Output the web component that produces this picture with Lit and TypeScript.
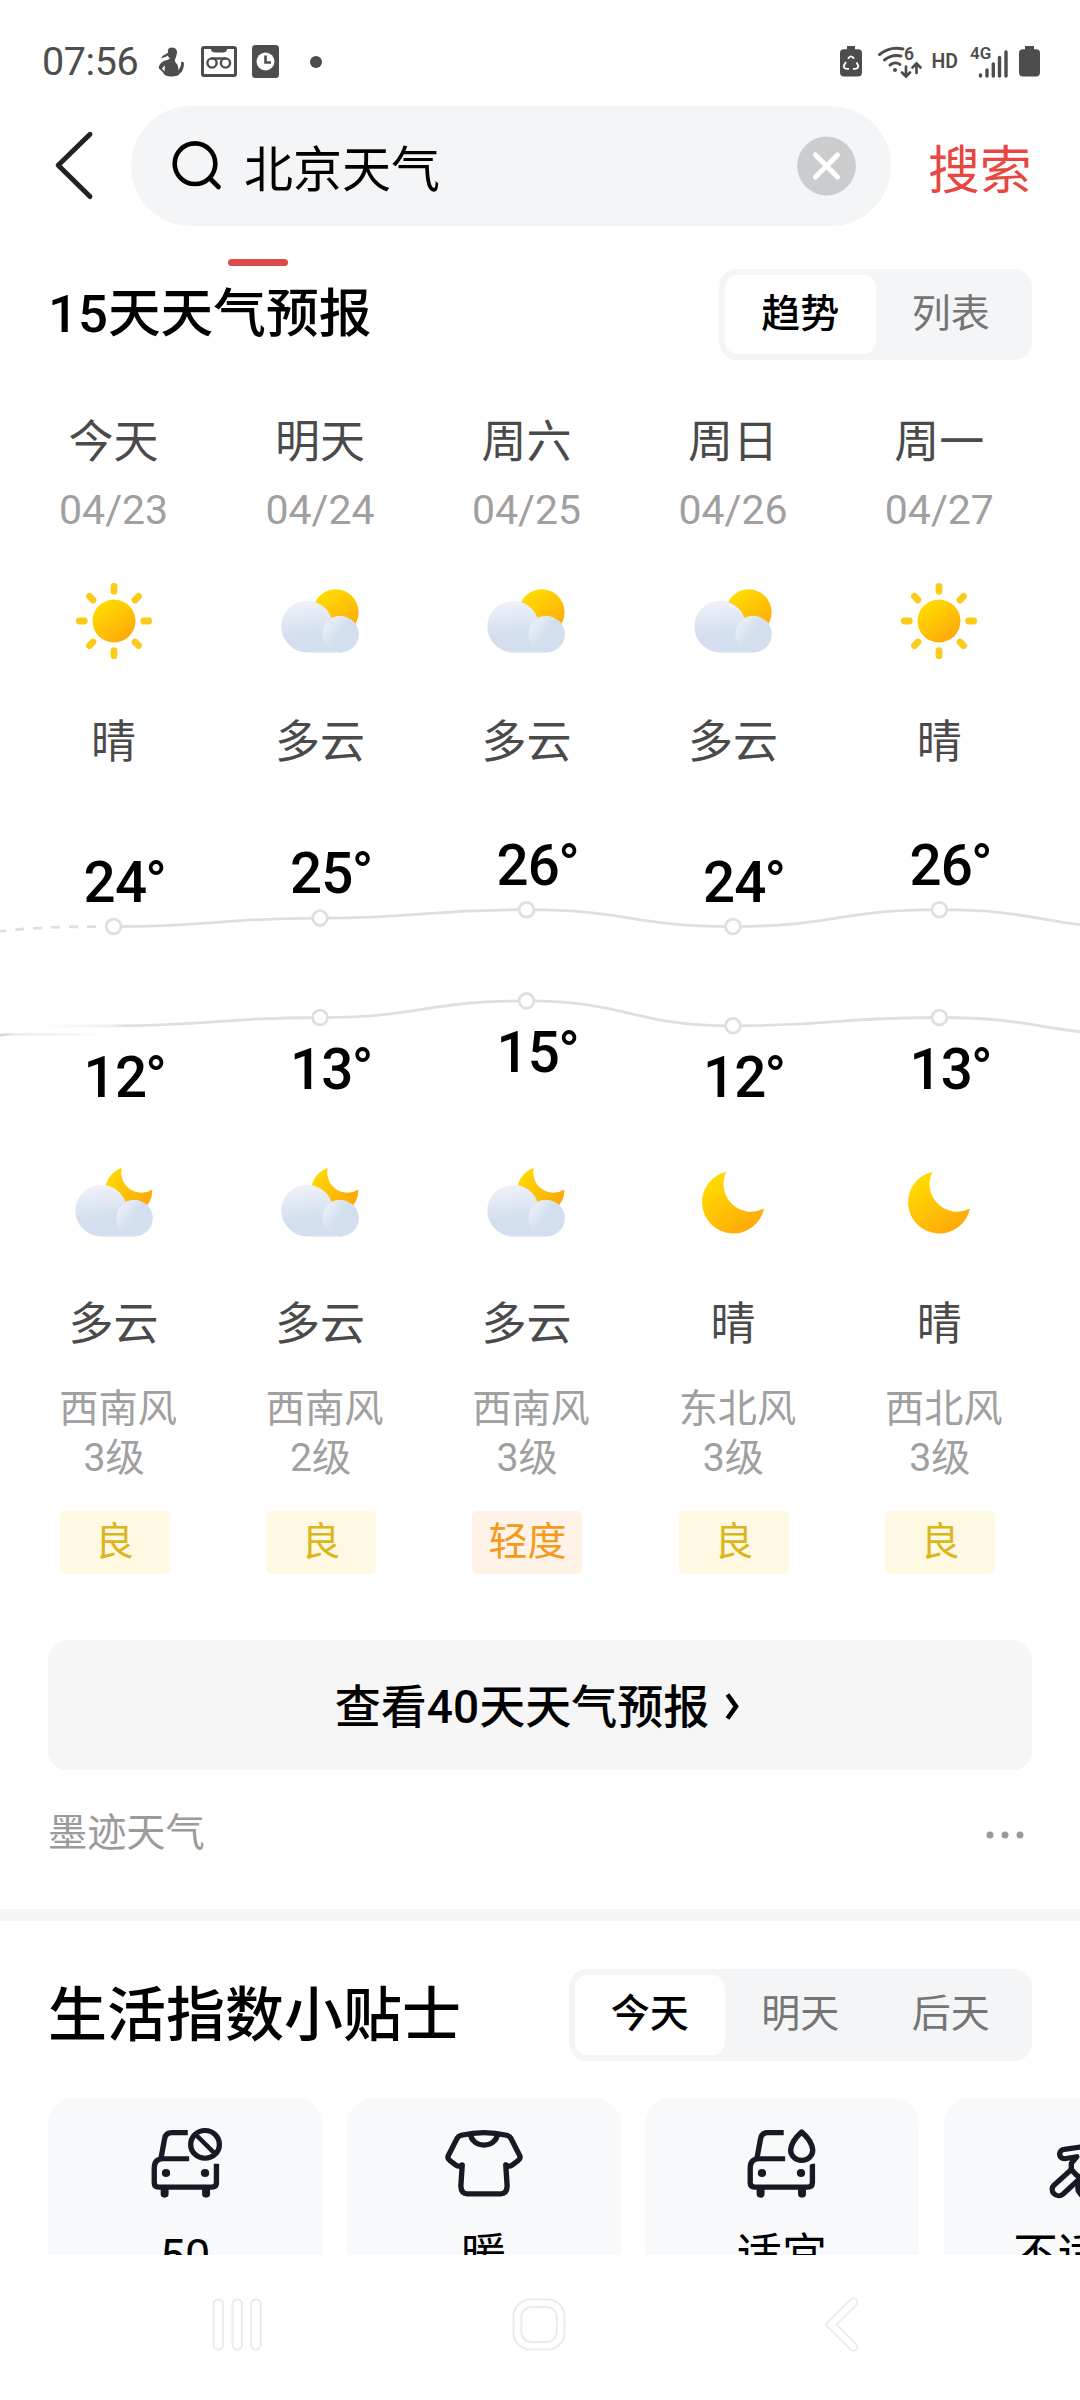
import { LitElement, html, svg, css } from 'lit';
import { customElement, property, state } from 'lit/decorators.js';
import { classMap } from 'lit/directives/class-map.js';

type Sky = 'sunny' | 'cloudy' | 'clearNight' | 'cloudyNight';

interface Day {
  name: string;
  date: string;
  day: Sky;
  high: number;
  low: number;
  night: Sky;
  wind: string;
  level: string;
  air: string;
}

const SKY_TEXT: Record<Sky, string> = {
  sunny: '晴',
  cloudy: '多云',
  clearNight: '晴',
  cloudyNight: '多云',
};

const DAYS: Day[] = [
  { name: '今天', date: '04/23', day: 'sunny', high: 24, low: 12, night: 'cloudyNight', wind: '西南风', level: '3级', air: '良' },
  { name: '明天', date: '04/24', day: 'cloudy', high: 25, low: 13, night: 'cloudyNight', wind: '西南风', level: '2级', air: '良' },
  { name: '周六', date: '04/25', day: 'cloudy', high: 26, low: 15, night: 'cloudyNight', wind: '西南风', level: '3级', air: '轻度' },
  { name: '周日', date: '04/26', day: 'cloudy', high: 24, low: 12, night: 'clearNight', wind: '东北风', level: '3级', air: '良' },
  { name: '周一', date: '04/27', day: 'sunny', high: 26, low: 13, night: 'clearNight', wind: '西北风', level: '3级', air: '良' },
];

const FONT = css`
  :host {
    font-family: Roboto, 'Noto Sans CJK SC', sans-serif;
  }
`;

@customElement('weather-icon')
export class WeatherIcon extends LitElement {
  @property() kind: Sky = 'sunny';

  static styles = css`
    :host {
      display: block;
      width: 80px;
      height: 80px;
    }
    svg {
      display: block;
      overflow: visible;
    }
  `;

  private cloud() {
    return svg`
      <path d="M27.2 19.8a25.9 25.8 0 0 1 24.3 17a18.2 18.2 0 1 1 9.1 34.6H27.2a25.9 25.8 0 0 1 0-51.6z" fill="url(#cloud)" />
      <circle cx="60.6" cy="53.2" r="18.2" fill="url(#puff)" />`;
  }

  private shape() {
    switch (this.kind) {
      case 'sunny':
        return svg`
          <circle cx="40" cy="40" r="21.5" fill="url(#sun)" />
          ${[0, 45, 90, 135, 180, 225, 270, 315].map(
            (a) => svg`<path d="M40 10.3V5.3" transform="rotate(${a} 40 40)" stroke="#fbcb1c" stroke-width="6.8" stroke-linecap="round" />`
          )}`;
      case 'cloudy':
        return svg`<circle cx="55.7" cy="31.2" r="22.9" fill="url(#sun)" />${this.cloud()}`;
      case 'clearNight':
        return svg`<path d="M33.5 6.7A31.3 31.3 0 1 0 71 43.4A27.5 27.5 0 0 1 33.5 6.7z" fill="url(#sun)" />`;
      default:
        return svg`
          <path d="M47.6 3.1A23.5 23.5 0 1 0 78.3 24.4A20.2 20.2 0 0 1 47.6 3.1z" fill="url(#moon)" />
          ${this.cloud()}`;
    }
  }

  render() {
    return html`
      <svg width="80" height="80" viewBox="0 0 80 80">
        <defs>
          <linearGradient id="sun" x1="0.1" y1="0" x2="0.8" y2="1">
            <stop offset="0.1" stop-color="#ffdc00" />
            <stop offset="1" stop-color="#ffa60a" />
          </linearGradient>
          <linearGradient id="moon" x1="0" y1="0" x2="1" y2="0.7">
            <stop offset="0.2" stop-color="#ffd400" />
            <stop offset="1" stop-color="#fba60c" />
          </linearGradient>
          <linearGradient id="cloud" x1="0.25" y1="0" x2="0.4" y2="1">
            <stop offset="0" stop-color="#f1f2fa" />
            <stop offset="0.65" stop-color="#d3dfee" />
          </linearGradient>
          <linearGradient id="puff" x1="0.05" y1="0.2" x2="0.45" y2="0.5">
            <stop offset="0" stop-color="#ebf0f8" />
            <stop offset="1" stop-color="#d3dfee" />
          </linearGradient>
        </defs>
        ${this.shape()}
      </svg>
    `;
  }
}

@customElement('segment-tabs')
export class SegmentTabs extends LitElement {
  @property({ attribute: false }) items: string[] = [];

  @state() private active = 0;

  static styles = [
    FONT,
    css`
      :host {
        display: flex;
        box-sizing: border-box;
        height: 91.5px;
        padding: 6px;
        border-radius: 18px;
        background: #f3f5f7;
      }
      .tab {
        display: flex;
        justify-content: center;
        width: 150.5px;
        border-radius: 13px;
        font-size: 39px;
        line-height: 78px;
        color: #757575;
      }
      .tab.on {
        background: #fff;
        color: #000;
        font-weight: 500;
      }
    `,
  ];

  render() {
    return this.items.map(
      (label, i) => html`<div
        class=${classMap({ tab: true, on: i === this.active })}
        @click=${() => (this.active = i)}
      >
        ${label}
      </div>`
    );
  }
}

const COL = 206.45;
const FIRST_X = 113.6;

@customElement('temperature-trend')
export class TemperatureTrend extends LitElement {
  @property({ attribute: false }) days: Day[] = [];

  static styles = [
    FONT,
    css`
      :host {
        display: block;
        height: 300px;
      }
      svg {
        display: block;
      }
      .line {
        fill: none;
        stroke: #dedfe3;
        stroke-width: 2.8;
      }
      .dot {
        fill: #fff;
        stroke: #dedfe3;
        stroke-width: 2.8;
      }
      .temp {
        font-size: 56.5px;
        font-weight: 500;
        letter-spacing: -0.8px;
        fill: #000;
      }
    `,
  ];

  private curve(ys: number[]): string {
    return ys
      .map((y, i) => {
        const x = FIRST_X + i * COL;
        if (i === 0) return `M${x} ${y}`;
        const mid = x - COL / 2;
        return `C${mid} ${ys[i - 1]} ${mid} ${y} ${x} ${y}`;
      })
      .join('');
  }

  render() {
    const highs = this.days.map((d) => 107.5 - (d.high - 24) * 8.4);
    const lows = this.days.map((d) => 206.8 - (d.low - 12) * 8.3);
    const x = (i: number) => FIRST_X + i * COL;
    return html`
      <svg width="1080" height="300" viewBox="0 0 1080 300">
        <defs>
          <linearGradient id="low" gradientUnits="userSpaceOnUse" x1="40" y1="0" x2="126" y2="0">
            <stop offset="0" stop-color="#dedfe3" stop-opacity="0" />
            <stop offset="0.8" stop-color="#dedfe3" stop-opacity="0.5" />
            <stop offset="1" stop-color="#dedfe3" />
          </linearGradient>
          <linearGradient id="past" gradientUnits="userSpaceOnUse" x1="0" y1="0" x2="110" y2="0">
            <stop offset="0" stop-color="#d0d1d5" />
            <stop offset="0.12" stop-color="#ebebed" />
            <stop offset="1" stop-color="#fff" />
          </linearGradient>
        </defs>
        <path class="line" stroke-dasharray="9 9" d="M96 107.700C60 107.700 40 108 -6 112.800" />
        <path class="line" d=${this.curve([...highs, 109])} />
        <path d="M0 216.200Q4 215.400 10 215.400H110" fill="none" stroke="url(#past)" stroke-width="2.6" />
        <path d=${'M40 207L' + this.curve([...lows, 216]).slice(1)} fill="none" stroke="url(#low)" stroke-width="2.8" />
        ${highs.map(
          (y, i) => svg`
            <circle class="dot" cx=${x(i)} cy=${y} r="7.4" />
            <text class="temp" x=${x(i) - 30} y=${y - 25}>${this.days[i].high}<tspan dx="-1">°</tspan></text>`
        )}
        ${lows.map(
          (y, i) => svg`
            ${i ? svg`<circle class="dot" cx=${x(i)} cy=${y} r="7.4" />` : ''}
            <text class="temp" x=${x(i) - 30} y=${y + 71.2}>${this.days[i].low}<tspan dx="-1">°</tspan></text>`
        )}
      </svg>
    `;
  }
}

// car body shared by the plate-limit and car-wash tips
const car = svg`
  <path d="M118 20H72Q54 20 51 38L41 94" />
  <path d="M122 98H46Q21 98 21 126V170Q21 183 34 183H188Q201 183 201 170V113" />
  <path d="M51 192V203M171 192V203" stroke-width="23" stroke-linecap="round" />
  <circle cx="55" cy="141" r="12" fill="#171a24" stroke="none" />
  <circle cx="168" cy="141" r="12" fill="#171a24" stroke="none" />`;

const TIPS = [
  {
    label: '50',
    icon: svg`${car}
      <circle cx="168" cy="55" r="49" fill="#f7f9fb" stroke="#f7f9fb" />
      <circle cx="168" cy="55" r="41.5" />
      <path d="M140 25L196 82" stroke-width="13" />`,
  },
  {
    label: '暖',
    icon: svg`
      <path d="M44 28Q110 12 176 28Q184 30 188 37L213 88Q217 97 209 103L192 117Q186 122 179 119L173 116L177 180Q176 203 158 203H62Q44 203 43 180L47 116L41 119Q34 122 28 117L11 103Q3 97 7 88L32 37Q36 30 44 28Z" />
      <path d="M71 24C75 68 145 68 149 24" />`,
  },
  {
    label: '适宜',
    icon: svg`<g transform="translate(-3 0)">${car}
      <path d="M170 18Q140 45 138 72A32 31 0 0 0 202 72Q200 45 170 18Z" fill="#f7f9fb" stroke="#f7f9fb" stroke-width="38" />
      <path d="M170 18Q140 45 138 72A32 31 0 0 0 202 72Q200 45 170 18Z" />
    </g>`,
  },
  {
    label: '不适宜',
    icon: svg`
      <path d="M118 62L62 70A14 14 0 0 0 62 98L98 92L82 112V130L98 148L118 158" />
      <path d="M80 132L33 176A18 18 0 0 0 58 204L110 154" />
      <path d="M110 158Q98 168 102 194L112 208" />`,
  },
];

@customElement('app-root')
export class AppRoot extends LitElement {
  static styles = [
    FONT,
    css`
      :host {
        display: flex;
        flex-direction: column;
        width: 1080px;
        height: 2400px;
        overflow: hidden;
        background: #fff;
        color: #000;
      }
      svg {
        display: block;
        flex: none;
        overflow: visible;
      }
      .status {
        display: flex;
        align-items: center;
        height: 80px;
        padding: 43px 39px 0 42px;
        box-sizing: border-box;
        color: #4d4d4d;
      }
      .clock {
        width: 116px;
        font-size: 39.5px;
        line-height: 36px;
        letter-spacing: -0.4px;
      }
      .spacer {
        flex: 1;
      }
      .hd {
        font-size: 19.5px;
        font-weight: 600;
        line-height: 34px;
        margin: 0 13px 0 9px;
      }
      .net {
        font-size: 17px;
        font-weight: 600;
      }
      .six {
        font-size: 17.5px;
        font-weight: 600;
      }
      .search {
        display: flex;
        align-items: center;
        height: 120px;
        margin-top: 26px;
      }
      .back {
        margin-left: 53px;
      }
      .pill {
        display: flex;
        align-items: center;
        box-sizing: border-box;
        width: 760px;
        height: 120px;
        margin-left: 37px;
        padding: 0 35px 0 39px;
        border-radius: 60px;
        background: #f3f5f7;
      }
      .query {
        flex: 1;
        margin-left: 20px;
        font-size: 49px;
        line-height: 60px;
        padding-top: 10px;
      }
      .go {
        margin-left: 37px;
        padding-top: 12px;
        font-size: 51.8px;
        line-height: 60px;
        color: #ea4640;
      }
      .marker {
        width: 60px;
        height: 6.5px;
        margin: 33px 0 0 228px;
        border-radius: 4px;
        background: #d94c4a;
      }
      .head {
        display: flex;
        justify-content: space-between;
        padding: 0 48px;
      }
      .forecast-head {
        margin-top: 3px;
      }
      .title {
        font-size: 52.7px;
        font-weight: 500;
        line-height: 90px;
      }
      .days {
        display: grid;
        grid-template-columns: repeat(5, 206.45px);
        padding-left: 10.4px;
      }
      .cell {
        display: flex;
        flex-direction: column;
        align-items: center;
      }
      .name,
      .sky {
        height: 46px;
        font-size: 45px;
        line-height: 46px;
        color: #4a4a4a;
      }
      .name {
        margin-top: 60px;
      }
      .date {
        height: 46px;
        margin: 21px 0 47.6px;
        font-size: 41px;
        line-height: 46px;
        color: #a0a0a0;
      }
      .day-sky {
        margin: 59.4px 0 53.5px;
      }
      .night-icon {
        margin-top: 45.9px;
      }
      .night-sky {
        margin: 56.6px 0 37px;
      }
      .wind {
        width: 110px;
        height: 98px;
        margin-left: 1px;
        font-size: 39.2px;
        line-height: 49px;
        color: #a0a0a0;
        text-align: center;
        white-space: nowrap;
      }
      .wind-name {
        width: 118px;
      }
      .air {
        width: 110px;
        height: 62.3px;
        margin: 28.5px 0 0 2px;
        border-radius: 5px;
        background: #fff9e3;
        color: #dbb61c;
        font-size: 39px;
        line-height: 63px;
        text-align: center;
      }
      .air.mild {
        background: #fff2e6;
        color: #f39a1d;
      }
      .more {
        display: flex;
        justify-content: center;
        align-items: center;
        gap: 15px;
        box-sizing: border-box;
        height: 130px;
        margin: 66.5px 48px 0;
        padding: 3px 5px 0 0;
        border-radius: 19px;
        background: #f6f6f7;
        font-size: 46px;
        font-weight: 500;
      }
      .more-text {
        line-height: 60px;
      }
      .source {
        display: flex;
        justify-content: space-between;
        align-items: center;
        height: 60px;
        margin: 33px 56px 46px 48px;
        font-size: 39.2px;
        line-height: 62px;
        color: #9b9b9b;
      }
      .divider {
        height: 12px;
        flex: none;
        background: #f3f5f7;
      }
      .life-head {
        margin-top: 48px;
      }
      .life-title {
        font-size: 59px;
        line-height: 94px;
        height: 91.5px;
      }
      .cards {
        display: flex;
        flex: none;
        gap: 24.5px;
        height: 157.5px;
        margin: 37px 0 0 48px;
        overflow: hidden;
      }
      .card {
        flex: none;
        display: flex;
        flex-direction: column;
        align-items: center;
        width: 274px;
        height: 260px;
        border-radius: 26px;
        background: #f7f9fb;
        font-size: 45px;
      }
      .card-icon {
        margin: 28.3px 0 33px;
      }
      .card-label {
        line-height: 46px;
      }
      .nav {
        flex: 1;
        display: flex;
        align-items: flex-start;
        padding: 42px 0 0 211px;
      }
    `,
  ];

  private renderStatus() {
    return html`
      <div class="status">
        <div class="clock">07:56</div>
        <svg width="26" height="30" viewBox="0 0 26 32" preserveAspectRatio="none" fill="#4d4d4d">
          <path d="M10 6Q9 0.500 14 0.500Q19.500 0.500 19 7L17.500 12Q16 15 18 17Q21 20 20 25Q24 20 23 16Q25 15 26 17Q26 25 22 28Q20 32 12 31.500Q6 31 5 27L1 23Q0 21 3 17Q6 14 10 13.500L12 12Q10 11 10 9L8 10.500Q5 11 3 12.500Q4 9 7 8Z" />
          <path d="M7 19.500L4 23L6.500 26Z" fill="#fff" />
        </svg>
        <svg width="68" height="31" viewBox="-17 0 68 31" fill="none" stroke="#4d4d4d">
          <rect x="1.500" y="1.500" width="33" height="28" rx="1.500" stroke-width="3" />
          <path d="M10 2H26V4Q25 6.500 22 6.500H14Q11 6.500 10 4Z" fill="#4d4d4d" stroke="none" />
          <circle cx="11" cy="17" r="4.600" stroke-width="2.400" />
          <circle cx="24.500" cy="17" r="4.600" stroke-width="2.400" />
          <path d="M10.500 12.500H25" stroke-width="2.400" />
        </svg>
        <svg width="27" height="33" viewBox="0 0 27 33">
          <rect width="27" height="33" rx="3.500" fill="#4d4d4d" />
          <circle cx="13.500" cy="16.500" r="9" fill="#fff" />
          <path d="M13.500 10.500V17.500H19" fill="none" stroke="#4d4d4d" stroke-width="2.600" />
        </svg>
        <svg width="44" height="12" viewBox="-31 0 44 12">
          <circle cx="6" cy="6" r="6" fill="#4d4d4d" />
        </svg>
        <div class="spacer"></div>
        <svg width="22" height="31" viewBox="0 0 22 33" preserveAspectRatio="none">
          <path d="M7 0H15V3.500H18Q22 3.500 22 7.500V28Q22 32.500 18 32.500H4Q0 32.500 0 28V7.500Q0 3.500 4 3.500H7Z" fill="#4d4d4d" />
          <path d="M8 13.500Q11 8.500 14 13.500M16.500 17.500L18 20.500Q19 24 15 24.300H13M9 24.300H7Q3 24 4 20.500L6 17" fill="none" stroke="#fff" stroke-width="1.900" />
        </svg>
        <svg width="60" height="32" viewBox="-16 0 60 32" fill="none" stroke="#4d4d4d" stroke-linecap="round">
          <path d="M1.500 8.500Q12 0 25 3" stroke-width="2.900" />
          <path d="M6.500 14Q14 8 23 10" stroke-width="2.900" />
          <path d="M12 19Q17 15 22 18.500" stroke-width="2.900" />
          <circle cx="17" cy="24" r="2" fill="#4d4d4d" stroke="none" />
          <path d="M28 20.500V30M24 26.500L28 30.500L32 26.500M38.500 27V17.500M34.500 21.500L38.500 17.500L42.500 21.500" stroke-width="2.700" />
          <text class="six" x="26" y="14" fill="#4d4d4d" stroke="none">6</text>
        </svg>
        <div class="hd">HD</div>
        <svg width="38" height="32" viewBox="0 0 38 32" stroke="#4d4d4d" stroke-width="3.400" stroke-linecap="round">
          <text class="net" x="-1" y="12.500" fill="#4d4d4d" stroke="none">4G</text>
          <path d="M9.500 29V30M16 24V30M22.300 18V30M28.500 11.500V30M35 6V30" />
        </svg>
        <svg width="32" height="31" viewBox="-10 0 32 33" preserveAspectRatio="none">
          <path d="M6 0H15V3.500H17Q21 3.500 21 7.500V28Q21 32.500 17 32.500H4Q0 32.500 0 28V7.500Q0 3.500 4 3.500H6Z" fill="#4d4d4d" />
        </svg>
      </div>
    `;
  }

  private renderSearch() {
    return html`
      <div class="search">
        <svg class="back" width="41" height="74" viewBox="0 0 41 74">
          <path d="M37 5.300L5.200 36.300L37 67.500" fill="none" stroke="#222" stroke-width="5" stroke-linecap="round" stroke-linejoin="round" />
        </svg>
        <div class="pill">
          <svg width="54" height="54" viewBox="-2 0 54 54" fill="none" stroke="#000" stroke-width="4.600">
            <circle cx="23" cy="24.700" r="20.300" />
            <path d="M38 39.500L46.500 48" stroke-linecap="round" />
          </svg>
          <div class="query">北京天气</div>
          <svg width="59" height="59" viewBox="0 0 59 59">
            <circle cx="29.500" cy="29" r="29.400" fill="#cbccce" />
            <path d="M18.500 18L40.500 40M40.500 18L18.500 40" stroke="#fff" stroke-width="5" stroke-linecap="round" />
          </svg>
        </div>
        <div class="go">搜索</div>
      </div>
    `;
  }

  private renderForecast() {
    return html`
      <div class="head forecast-head">
        <div class="title">15天天气预报</div>
        <segment-tabs .items=${['趋势', '列表']}></segment-tabs>
      </div>
      <div class="days">
        ${DAYS.map(
          (d) => html`<div class="cell">
            <div class="name">${d.name}</div>
            <div class="date">${d.date}</div>
            <weather-icon .kind=${d.day}></weather-icon>
            <div class="sky day-sky">${SKY_TEXT[d.day]}</div>
          </div>`
        )}
      </div>
      <temperature-trend .days=${DAYS}></temperature-trend>
      <div class="days">
        ${DAYS.map(
          (d) => html`<div class="cell">
            <weather-icon class="night-icon" .kind=${d.night}></weather-icon>
            <div class="sky night-sky">${SKY_TEXT[d.night]}</div>
            <div class="wind">
              <div class="wind-name">${d.wind}</div>
              <div>${d.level}</div>
            </div>
            <div class=${classMap({ air: true, mild: d.air === '轻度' })}>${d.air}</div>
          </div>`
        )}
      </div>
      <div class="more">
        <div class="more-text">查看40天天气预报</div>
        <svg width="16" height="30" viewBox="0 0 16 30">
          <path d="M3.500 2.500L12 14.500L3.500 26.500" fill="none" stroke="#000" stroke-width="4.600" />
        </svg>
      </div>
      <div class="source">
        <div>墨迹天气</div>
        <svg width="38" height="8" viewBox="0 0 38 8" fill="#999">
          <circle cx="4" cy="6" r="3.500" />
          <circle cx="19" cy="6" r="3.500" />
          <circle cx="34" cy="6" r="3.500" />
        </svg>
      </div>
    `;
  }

  private renderTips() {
    return html`
      <div class="head life-head">
        <div class="title life-title">生活指数小贴士</div>
        <segment-tabs .items=${['今天', '明天', '后天']}></segment-tabs>
      </div>
      <div class="cards">
        ${TIPS.map(
          (t) => html`<div class="card">
            <svg class="card-icon" width="76" height="73.500" viewBox="0 0 220 220" preserveAspectRatio="none" fill="none" stroke="#171a24" stroke-width="15.500" stroke-linejoin="round">
              ${t.icon}
            </svg>
            <div class="card-label">${t.label}</div>
          </div>`
        )}
      </div>
    `;
  }

  private renderNav() {
    return html`
      <div class="nav">
        <svg width="652" height="56" viewBox="211 0 652 56" fill="none" stroke="#ebebeb" stroke-width="2">
          <rect x="213.500" y="2.500" width="9.500" height="50" rx="4.500" />
          <rect x="232.500" y="2.500" width="9.500" height="50" rx="4.500" />
          <rect x="251.200" y="2.500" width="9.500" height="50" rx="4.500" />
          <rect x="513.500" y="2.500" width="51" height="50" rx="17" />
          <rect x="521.300" y="10" width="35.500" height="35" rx="10" />
          <g stroke-linecap="round" stroke-linejoin="miter">
            <path d="M853.500 5.200L831 27.500L853.500 49.800" stroke-width="9.500" />
            <path d="M853.500 5.200L831 27.500L853.500 49.800" stroke="#fff" stroke-width="6" />
          </g>
        </svg>
      </div>
    `;
  }

  render() {
    return html`
      ${this.renderStatus()} ${this.renderSearch()}
      <div class="marker"></div>
      ${this.renderForecast()}
      <div class="divider"></div>
      ${this.renderTips()} ${this.renderNav()}
    `;
  }
}

declare global {
  interface HTMLElementTagNameMap {
    'app-root': AppRoot;
    'weather-icon': WeatherIcon;
    'segment-tabs': SegmentTabs;
    'temperature-trend': TemperatureTrend;
  }
}
